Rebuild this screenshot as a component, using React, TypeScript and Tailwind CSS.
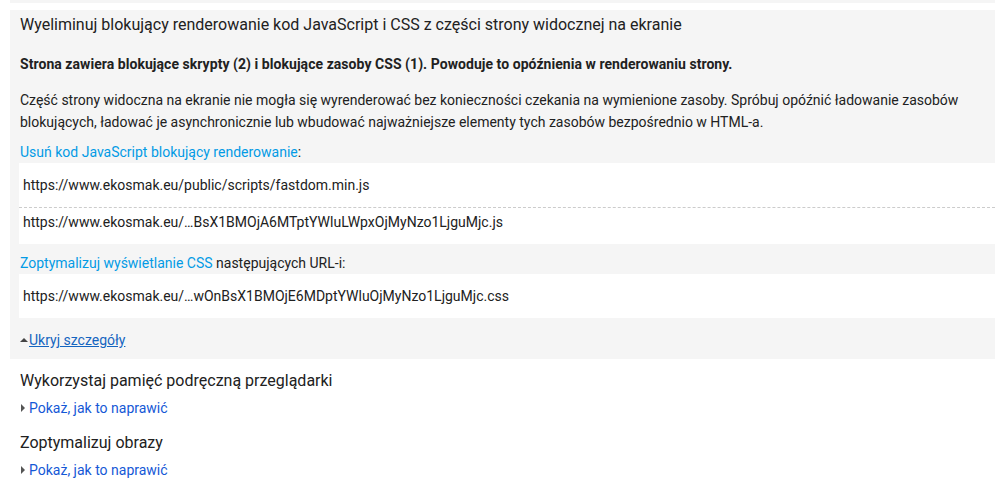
export default function App() {
  const font = { fontFamily: 'Roboto, "Noto Sans", sans-serif' }
  return (
    <div className="min-h-[486px] bg-white text-[#212121]" style={font}>
      <div className="ml-[10px] h-[3px] bg-[#f5f5f5]" />
      <div className="mt-[7px] ml-[10px] bg-[#f5f5f5] pl-[10px] pb-[9px] pt-[5px]">
        <h2 className="text-[16px] leading-[20px]">Wyeliminuj blokujący renderowanie kod JavaScript i CSS z części strony widocznej na ekranie</h2>
        <p className="mt-[19px] text-[14px] leading-[20px] font-bold tracking-[0.05px]">Strona zawiera blokujące skrypty (2) i blokujące zasoby CSS (1). Powoduje to opóźnienia w renderowaniu strony.</p>
        <p className="mt-[15px] text-[14px] leading-[22px] pr-4">Część strony widoczna na ekranie nie mogła się wyrenderować bez konieczności czekania na wymienione zasoby. Spróbuj opóźnić ładowanie zasobów blokujących, ładować je asynchronicznie lub wbudować najważniejsze elementy tych zasobów bezpośrednio w HTML-a.</p>
        <p className="mt-[9px] text-[14px] leading-[20px]">
          <span className="text-[#039be5]">Usuń kod JavaScript blokujący renderowanie</span>:
        </p>
        <div className="mt-px -ml-px bg-white text-[14px] leading-[20px]">
          <div className="px-1 py-3 border-b border-dashed border-[#cccccc]">https://www.ekosmak.eu/public/scripts/fastdom.min.js</div>
          <div className="px-1 pt-1 pb-3">https://www.ekosmak.eu/…BsX1BMOjA6MTptYWluLWpxOjMyNzo1LjguMjc.js</div>
        </div>
        <p className="mt-[9px] text-[14px] leading-[20px]">
          <span className="text-[#039be5]">Zoptymalizuj wyświetlanie CSS</span> następujących URL-i:
        </p>
        <div className="mt-px -ml-px bg-white text-[14px] leading-[20px]">
          <div className="px-1 py-3">https://www.ekosmak.eu/…wOnBsX1BMOjE6MDptYWluOjMyNzo1LjguMjc.css</div>
        </div>
        <p className="mt-3 flex items-center text-[14px] leading-[20px]">
          <span className="mr-px h-0 w-0 border-x-[4px] border-b-[4px] border-x-transparent border-b-[#444444]" />
          <span className="text-[#1565c0] underline">Ukryj szczegóły</span>
        </p>
      </div>
      <div className="pl-[20px]">
        <h3 className="mt-3 text-[16px] leading-[20px]">Wykorzystaj pamięć podręczną przeglądarki</h3>
        <p className="mt-[7px] flex items-center text-[14px] leading-[20px]">
          <span className="ml-[1px] mr-[4px] h-0 w-0 border-y-[4px] border-l-[4px] border-y-transparent border-l-[#555555]" />
          <span className="text-[#1558d6]">Pokaż, jak to naprawić</span>
        </p>
        <h3 className="mt-[15px] text-[16px] leading-[20px]">Zoptymalizuj obrazy</h3>
        <p className="mt-[7px] flex items-center text-[14px] leading-[20px]">
          <span className="ml-[1px] mr-[4px] h-0 w-0 border-y-[4px] border-l-[4px] border-y-transparent border-l-[#555555]" />
          <span className="text-[#1558d6]">Pokaż, jak to naprawić</span>
        </p>
      </div>
    </div>
  )
}
